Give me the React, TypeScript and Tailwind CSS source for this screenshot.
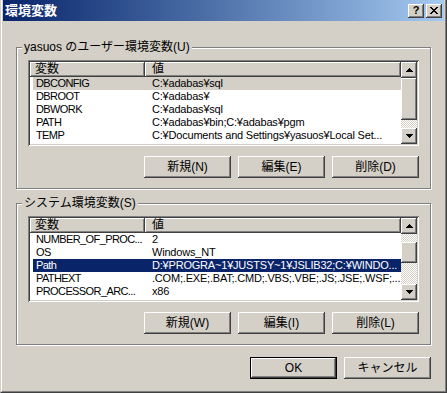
import React from "react";

type Row = { name: string; value: string; selected?: "gray" | "blue" };

const userVars: Row[] = [
  { name: "DBCONFIG", value: "C:¥adabas¥sql", selected: "gray" },
  { name: "DBROOT", value: "C:¥adabas¥" },
  { name: "DBWORK", value: "C:¥adabas¥sql" },
  { name: "PATH", value: "C:¥adabas¥bin;C:¥adabas¥pgm" },
  { name: "TEMP", value: "C:¥Documents and Settings¥yasuos¥Local Set..." },
  { name: "TMP", value: "C:¥Documents and Settings¥yasuos¥Local Set..." },
];

const systemVars: Row[] = [
  { name: "NUMBER_OF_PROC...", value: "2" },
  { name: "OS", value: "Windows_NT" },
  { name: "Path", value: "D:¥PROGRA~1¥JUSTSY~1¥JSLIB32;C:¥WINDO...", selected: "blue" },
  { name: "PATHEXT", value: ".COM;.EXE;.BAT;.CMD;.VBS;.VBE;.JS;.JSE;.WSF;..." },
  { name: "PROCESSOR_ARC...", value: "x86" },
  { name: "PROCESSOR_IDEN...", value: "x86 Family 6 Model 8 Stepping 3, GenuineIntel" },
];

const raised =
  "bg-[#d4d0c8] shadow-[inset_-1px_-1px_0_#404040,inset_1px_1px_0_#ffffff,inset_-2px_-2px_0_#808080]";
const sunken =
  "shadow-[inset_1px_1px_0_#808080,inset_-1px_-1px_0_#ffffff,inset_2px_2px_0_#404040,inset_-2px_-2px_0_#d4d0c8]";

const Arrow = ({ up }: { up?: boolean }) => (
  <div className={`flex h-4 w-4 shrink-0 items-center justify-center ${raised}`}>
    <svg width="7" height="4" viewBox="0 0 7 4" shapeRendering="crispEdges">
      {up ? (
        <>
          <rect x="3" y="0" width="1" height="1" />
          <rect x="2" y="1" width="3" height="1" />
          <rect x="1" y="2" width="5" height="1" />
          <rect x="0" y="3" width="7" height="1" />
        </>
      ) : (
        <>
          <rect x="0" y="0" width="7" height="1" />
          <rect x="1" y="1" width="5" height="1" />
          <rect x="2" y="2" width="3" height="1" />
          <rect x="3" y="3" width="1" height="1" />
        </>
      )}
    </svg>
  </div>
);

const ScrollBar = ({ before, thumb }: { before: number; thumb: number }) => (
  <div className="flex w-4 shrink-0 flex-col">
    <Arrow up />
    <div className="flex flex-1 flex-col bg-[repeating-conic-gradient(#d4d0c8_0_25%,#ffffff_0_50%)] bg-[length:2px_2px]">
      <div style={{ height: before }} />
      <div style={{ height: thumb }} className={raised} />
    </div>
    <Arrow />
  </div>
);

const VarList = ({ rows, before, thumb }: { rows: Row[]; before: number; thumb: number }) => (
  <div className={`flex h-[86px] bg-white p-[2px] ${sunken}`}>
    <div className="flex min-w-0 flex-1 flex-col overflow-hidden">
      <div className="flex h-[15px] shrink-0 text-[12px] leading-[15px]">
        <div className={`w-[115px] shrink-0 pl-[5px] ${raised}`}>変数</div>
        <div className={`flex-1 pl-[7px] ${raised}`}>値</div>
      </div>
      {rows.map((row) => (
        <div key={row.name} className="flex h-[13px] shrink-0 pl-[3px] text-[11px] leading-[13px]">
          <div
            className={`flex min-w-0 flex-1 ${
              row.selected === "blue"
                ? "bg-[#0a246a] text-white"
                : row.selected === "gray"
                  ? "bg-[#d4d0c8] text-black"
                  : "text-black"
            }`}
          >
            <div className="w-[112px] shrink-0 overflow-hidden whitespace-nowrap pl-[3px] tracking-[-0.6px]">
              {row.name}
            </div>
            <div className="min-w-0 flex-1 overflow-hidden whitespace-nowrap pl-[7px] tracking-[-0.2px]">
              {row.value}
            </div>
          </div>
        </div>
      ))}
    </div>
    <ScrollBar before={before} thumb={thumb} />
  </div>
);

const Button = ({ label, isDefault }: { label: string; isDefault?: boolean }) =>
  isDefault ? (
    <div className="h-[22px] w-[87px] border border-black">
      <div className={`flex h-full items-center justify-center text-[12px] ${raised}`}>{label}</div>
    </div>
  ) : (
    <div className={`flex h-[22px] w-[87px] items-center justify-center text-[12px] ${raised}`}>{label}</div>
  );

const Group = ({ label, children }: { label: string; children: React.ReactNode }) => (
  <div className="relative h-[142px] border border-[#808080] px-[11px] pt-[12px] shadow-[1px_1px_0_#ffffff,inset_1px_1px_0_#ffffff]">
    <span className="absolute left-[5px] top-[-8px] bg-[#d4d0c8] px-[2px] text-[12px] leading-[14px]">{label}</span>
    {children}
  </div>
);

export default function App() {
  return (
    <div className="h-[393px] w-[447px] border-b border-l border-r border-b-[#404040] border-l-[#d4d0c8] border-r-[#404040] bg-[#d4d0c8] font-['Liberation_Sans','Noto_Sans_CJK_JP',sans-serif] text-black">
      <div className="flex h-full flex-col border-b border-l border-r border-b-[#808080] border-l-white border-r-[#808080] px-[1px] pb-[1px]">
        <div className="flex h-[21px] shrink-0 items-center justify-between bg-linear-to-r from-[#0a246a] to-[#a6caf0] pl-[2px] pr-[2px]">
          <span className="text-[13px] font-bold leading-[21px] text-white">環境変数</span>
          <div className="flex gap-[2px]">
            <div className={`flex h-[14px] w-4 items-center justify-center text-[11px] font-bold leading-none ${raised}`}>?</div>
            <div className={`flex h-[14px] w-4 items-center justify-center ${raised}`}>
              <svg width="8" height="7" viewBox="0 0 8 7" shapeRendering="crispEdges">
                <rect x="0" y="0" width="2" height="1" />
                <rect x="6" y="0" width="2" height="1" />
                <rect x="1" y="1" width="2" height="1" />
                <rect x="5" y="1" width="2" height="1" />
                <rect x="2" y="2" width="4" height="1" />
                <rect x="3" y="3" width="2" height="1" />
                <rect x="2" y="4" width="4" height="1" />
                <rect x="1" y="5" width="2" height="1" />
                <rect x="5" y="5" width="2" height="1" />
                <rect x="0" y="6" width="2" height="1" />
                <rect x="6" y="6" width="2" height="1" />
              </svg>
            </div>
          </div>
        </div>

        <div className="flex flex-col px-[13px] pt-[26px]">
          <Group label="yasuos のユーザー環境変数(U)">
            <VarList rows={userVars} before={0} thumb={42} />
            <div className="mt-[10px] flex justify-end gap-[7px]">
              <Button label="新規(N)" />
              <Button label="編集(E)" />
              <Button label="削除(D)" />
            </div>
          </Group>

          <div className="mt-[14px]">
            <Group label="システム環境変数(S)">
              <VarList rows={systemVars} before={8} thumb={21} />
              <div className="mt-[10px] flex justify-end gap-[7px]">
                <Button label="新規(W)" />
                <Button label="編集(I)" />
                <Button label="削除(L)" />
              </div>
            </Group>
          </div>

          <div className="mt-[12px] flex justify-end gap-[7px]">
            <Button label="OK" isDefault />
            <Button label="キャンセル" />
          </div>
        </div>
      </div>
    </div>
  );
}
